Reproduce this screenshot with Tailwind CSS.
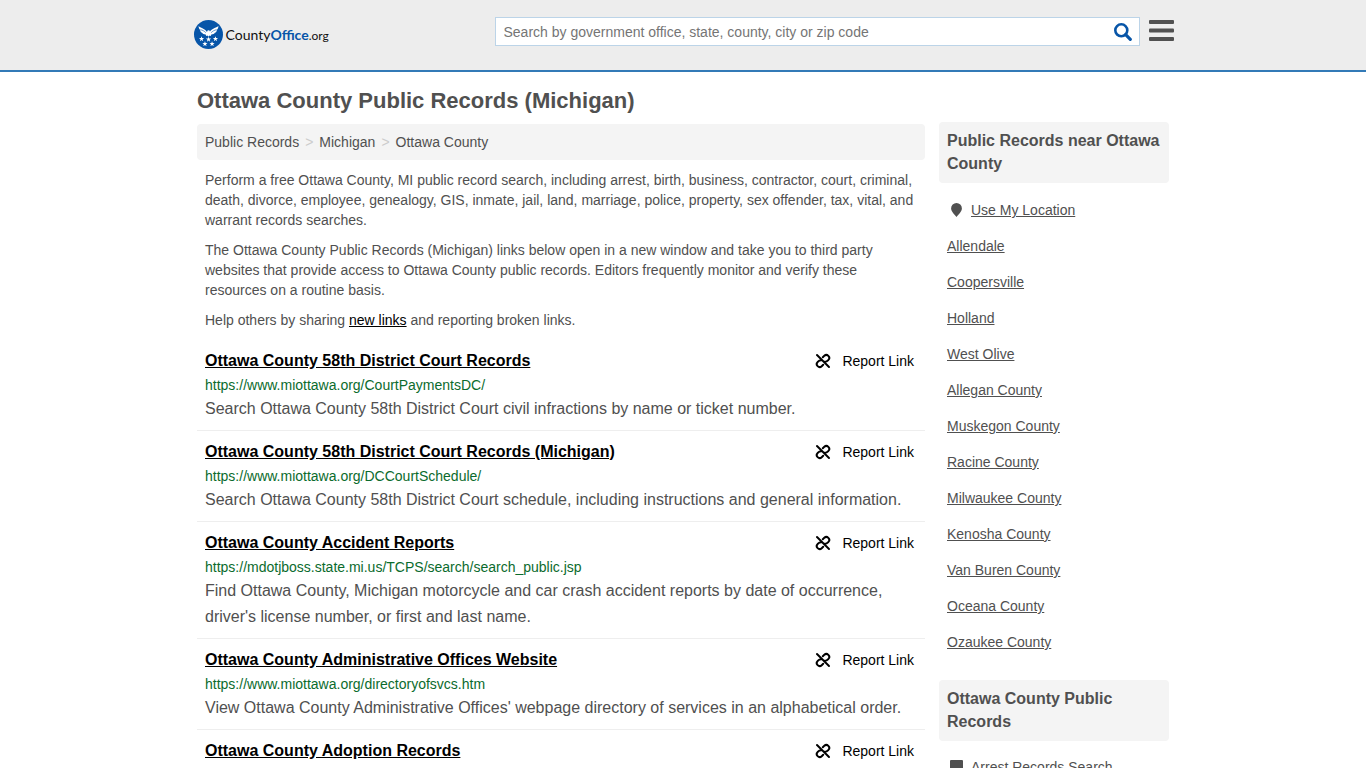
<!DOCTYPE html>
<html lang="en">
<head>
    <meta charset="UTF-8">
    <meta name="viewport" content="width=device-width, initial-scale=1.0">
    <title>Ottawa County Public Records (Michigan)</title>
    <script src="https://cdn.jsdelivr.net/npm/@tailwindcss/browser@4"></script>
</head>
<body class="bg-white font-['Liberation_Sans',Arial,sans-serif] text-sm text-[#505050]">
    <!-- Shared icons -->
    <svg class="hidden">
        <symbol id="unlink" viewBox="0 0 16 16">
            <g fill="none" stroke="#000" stroke-width="2" stroke-linecap="round">
                <path d="M2 2 14 14"/>
                <path d="M7.800 4.200 9.300 2.800a2.900 2.900 0 0 1 4.100 4.100L11.600 8.400 9.800 8.700"/>
                <path d="M6.200 7.300 4.400 7.600 2.600 9.100a2.900 2.900 0 0 0 4.100 4.100L8.200 11.800"/>
            </g>
        </symbol>
        <symbol id="star" viewBox="0 0 10 10">
            <path fill="#fff" d="M5 .3 6.200 3.600 9.800 3.700 6.900 5.900 8 9.400 5 7.300 2 9.400 3.100 5.900.2 3.700 3.800 3.600Z"/>
        </symbol>
    </svg>

    <!-- Header -->
    <header class="border-b-2 border-[#337ab7] bg-[#ededed]">
        <div class="mx-auto flex h-[70px] max-w-[981px] items-start">
            <a href="#" class="mt-5 flex w-[302px] shrink-0 items-center gap-[3px] pl-px font-['Lato','Liberation_Sans',sans-serif] text-[#111]">
                <svg class="size-[29px]" viewBox="0 0 29 29">
                    <circle cx="14.500" cy="14.500" r="14.500" fill="#0755a8"/>
                    <path fill="#fff" d="M4.500 6c1 1.500 5.500 1.800 8.500 6l.6-1.500 1.300-.3 1.100.8-.4 1c3-4.200 7.400-4.500 8.900-6-.3 2.300-.9 3.200-1.600 3.900-.3 1.800-1.100 2.400-2 2.900-.7 1.200-1.700 1.500-3.600 1.700l-.5 1.600-1.300-.7-1 1.300-1-1.300-1.300.7-.5-1.600c-1.900-.2-2.900-.5-3.600-1.700-.9-.5-1.700-1.100-2-2.900C5.400 9.200 4.800 8.300 4.500 6Z"/>
                    <path fill="none" stroke="#0755a8" stroke-width=".6" d="M6.300 9.700c2.400.4 4 1.400 5.500 3M22.700 9.700c-2.400.4-4 1.400-5.500 3"/>
                    <use href="#star" x="4.800" y="16" width="5.500" height="5.500"/>
                    <use href="#star" x="11.800" y="16.500" width="5.500" height="5.500"/>
                    <use href="#star" x="18.700" y="16" width="5.500" height="5.500"/>
                    <use href="#star" x="8.200" y="21" width="5.500" height="5.500"/>
                    <use href="#star" x="15.300" y="21" width="5.500" height="5.500"/>
                </svg>
                <span>County<b class="text-[#0755a8]">Office</b><span class="text-xs">.org</span></span>
            </a>
            <form class="mt-[17px] flex h-[29px] flex-1 items-center border border-[#bcd4e8] bg-white">
                <input type="text" aria-label="Search" placeholder="Search by government office, state, county, city or zip code" class="h-full min-w-0 flex-1 px-2 outline-none placeholder:text-[#757575]">
                <button type="button" aria-label="Submit search" class="mr-[7px]">
                    <svg class="size-[18px]" viewBox="0 0 18 18" fill="none" stroke="#0755a8">
                        <circle cx="7.300" cy="7.300" r="6" stroke-width="2.600"/>
                        <path d="M11.700 11.700 16.300 16.300" stroke-width="3.200" stroke-linecap="round"/>
                    </svg>
                </button>
            </form>
            <button type="button" aria-label="Menu" class="mt-5 ml-[9px]">
                <svg class="h-[21px] w-[25px]" viewBox="0 0 25 21" fill="#505050">
                    <rect width="25" height="4" rx="1"/>
                    <rect y="8.500" width="25" height="4" rx="1"/>
                    <rect y="17" width="25" height="4" rx="1"/>
                </svg>
            </button>
        </div>
    </header>

    <div class="mx-auto flex max-w-[972px] gap-[14px]">
        <!-- Main column -->
        <main class="min-w-0 flex-1">
            <h1 class="mt-[15px] text-[22px] leading-7 font-bold">Ottawa County Public Records (Michigan)</h1>

            <nav class="mt-[9px] flex gap-[6px] rounded-sm bg-[#f4f4f4] p-2 leading-5">
                <a href="#">Public Records</a>
                <span class="text-[#ccc]">&gt;</span>
                <a href="#">Michigan</a>
                <span class="text-[#ccc]">&gt;</span>
                <a href="#">Ottawa County</a>
            </nav>

            <div class="space-y-[10px] px-2 py-[10px] leading-5">
                <p>Perform a free Ottawa County, MI public record search, including arrest, birth, business, contractor, court, criminal, death, divorce, employee, genealogy, GIS, inmate, jail, land, marriage, police, property, sex offender, tax, vital, and warrant records searches.</p>
                <p>The Ottawa County Public Records (Michigan) links below open in a new window and take you to third party websites that provide access to Ottawa County public records. Editors frequently monitor and verify these resources on a routine basis.</p>
                <p>Help others by sharing <a href="#" class="text-black underline">new links</a> and reporting broken links.</p>
            </div>

            <!-- Record links -->
            <ul class="divide-y divide-[#eee]">
                <li class="px-2 py-2">
                    <div class="flex justify-between pt-px pr-[3px] leading-6 text-black">
                        <a href="#" class="text-base font-bold underline">Ottawa County 58th District Court Records</a>
                        <a href="#" class="flex items-center gap-[11px]"><svg class="size-4"><use href="#unlink"/></svg>Report Link</a>
                    </div>
                    <p class="mt-[2px] mb-px leading-5 text-[#0b6b2d]">https://www.miottawa.org/CourtPaymentsDC/</p>
                    <p class="text-base leading-[26px]">Search Ottawa County 58th District Court civil infractions by name or ticket number.</p>
                </li>
                <li class="px-2 py-2">
                    <div class="flex justify-between pt-px pr-[3px] leading-6 text-black">
                        <a href="#" class="text-base font-bold underline">Ottawa County 58th District Court Records (Michigan)</a>
                        <a href="#" class="flex items-center gap-[11px]"><svg class="size-4"><use href="#unlink"/></svg>Report Link</a>
                    </div>
                    <p class="mt-[2px] mb-px leading-5 text-[#0b6b2d]">https://www.miottawa.org/DCCourtSchedule/</p>
                    <p class="text-base leading-[26px]">Search Ottawa County 58th District Court schedule, including instructions and general information.</p>
                </li>
                <li class="px-2 py-2">
                    <div class="flex justify-between pt-px pr-[3px] leading-6 text-black">
                        <a href="#" class="text-base font-bold underline">Ottawa County Accident Reports</a>
                        <a href="#" class="flex items-center gap-[11px]"><svg class="size-4"><use href="#unlink"/></svg>Report Link</a>
                    </div>
                    <p class="mt-[2px] mb-px leading-5 text-[#0b6b2d]">https://mdotjboss.state.mi.us/TCPS/search/search_public.jsp</p>
                    <p class="text-base leading-[26px]">Find Ottawa County, Michigan motorcycle and car crash accident reports by date of occurrence, driver's license number, or first and last name.</p>
                </li>
                <li class="px-2 py-2">
                    <div class="flex justify-between pt-px pr-[3px] leading-6 text-black">
                        <a href="#" class="text-base font-bold underline">Ottawa County Administrative Offices Website</a>
                        <a href="#" class="flex items-center gap-[11px]"><svg class="size-4"><use href="#unlink"/></svg>Report Link</a>
                    </div>
                    <p class="mt-[2px] mb-px leading-5 text-[#0b6b2d]">https://www.miottawa.org/directoryofsvcs.htm</p>
                    <p class="text-base leading-[26px]">View Ottawa County Administrative Offices' webpage directory of services in an alphabetical order.</p>
                </li>
                <li class="px-2 pt-2">
                    <div class="flex justify-between pt-px pr-[3px] leading-6 text-black">
                        <a href="#" class="text-base font-bold underline">Ottawa County Adoption Records</a>
                        <a href="#" class="flex items-center gap-[11px]"><svg class="size-4"><use href="#unlink"/></svg>Report Link</a>
                    </div>
                </li>
            </ul>
        </main>

        <!-- Sidebar -->
        <aside class="mt-[50px] w-[230px] shrink-0">
            <h2 class="rounded-sm bg-[#f4f4f4] px-2 pt-[7px] pb-2 text-base leading-[23px] font-bold">Public Records near Ottawa County</h2>
            <ul class="mt-[9px] mb-5 px-2 leading-9 underline">
                <li class="flex items-center">
                    <svg class="ml-1 mr-[9px] h-[14px] w-[11px]" viewBox="0 0 11 14"><path fill="#505050" d="M5.500 0a5.400 5.400 0 0 1 5.400 5.400c0 3-3.400 5.900-5.400 8.600C3.500 11.300.1 8.400.1 5.400A5.400 5.400 0 0 1 5.500 0Z"/></svg>
                    <a href="#">Use My Location</a>
                </li>
                <li><a href="#">Allendale</a></li>
                <li><a href="#">Coopersville</a></li>
                <li><a href="#">Holland</a></li>
                <li><a href="#">West Olive</a></li>
                <li><a href="#">Allegan County</a></li>
                <li><a href="#">Muskegon County</a></li>
                <li><a href="#">Racine County</a></li>
                <li><a href="#">Milwaukee County</a></li>
                <li><a href="#">Kenosha County</a></li>
                <li><a href="#">Van Buren County</a></li>
                <li><a href="#">Oceana County</a></li>
                <li><a href="#">Ozaukee County</a></li>
            </ul>

            <h2 class="rounded-sm bg-[#f4f4f4] px-2 pt-[7px] pb-2 text-base leading-[23px] font-bold">Ottawa County Public Records</h2>
            <ul class="mt-2 px-2 leading-9 underline">
                <li class="flex items-center">
                    <svg class="ml-[3px] mr-2 h-[14px] w-[13px]" viewBox="0 0 13 14"><rect width="13" height="14" rx="1" fill="#505050"/></svg>
                    <a href="#">Arrest Records Search</a>
                </li>
            </ul>
        </aside>
    </div>
</body>
</html>
